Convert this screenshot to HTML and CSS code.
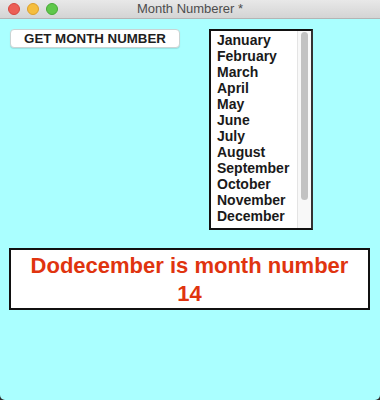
FILE: index.html
```html
<!DOCTYPE html>
<html>
<head>
<meta charset="utf-8">
<title>Month Numberer</title>
<link rel="stylesheet" href="styles.css">
</head>
<body>
<div class="window">
  <div class="titlebar">
    <div class="lights">
      <span class="light red"></span>
      <span class="light yellow"></span>
      <span class="light green"></span>
    </div>
    <div class="title">Month Numberer *</div>
  </div>
  <div class="content">
    <div class="toprow">
      <button class="btn">GET MONTH NUMBER</button>
      <div class="listbox">
        <ul class="list">
          <li>January</li>
          <li>February</li>
          <li>March</li>
          <li>April</li>
          <li>May</li>
          <li>June</li>
          <li>July</li>
          <li>August</li>
          <li>September</li>
          <li>October</li>
          <li>November</li>
          <li>December</li>
        </ul>
        <div class="track"><div class="thumb"></div></div>
      </div>
    </div>
    <div class="result">Dodecember is month number 14</div>
  </div>
</div>
</body>
</html>
```
FILE: styles.css
```css
html, body {
  margin: 0;
  padding: 0;
  background: #2a2a2a;
}
body {
  width: 380px;
  height: 400px;
  overflow: hidden;
  font-family: "Liberation Sans", Arial, sans-serif;
}
.window {
  width: 380px;
  height: 400px;
  background: #aaffff;
  border-radius: 0 0 5px 5px;
  overflow: hidden;
}
.titlebar {
  position: relative;
  height: 18px;
  background: linear-gradient(#e8e8e8, #d4d4d4);
  border-bottom: 1px solid #b4b4b4;
  display: flex;
  align-items: center;
  justify-content: center;
}
.lights {
  position: absolute;
  left: 8px;
  top: 3px;
  display: flex;
  gap: 7px;
}
.light {
  width: 12px;
  height: 12px;
  border-radius: 50%;
  box-sizing: border-box;
}
.red { background: #ec5f56; border: 1px solid #d6473f; }
.yellow { background: #f5be3e; border: 1px solid #dca02b; }
.green { background: #5fc84a; border: 1px solid #47a936; }
.title {
  font-size: 13px;
  color: #4d4d4d;
  line-height: 18px;
}
.content {
  padding: 10px 9px 0 9px;
}
.toprow {
  display: flex;
  align-items: flex-start;
  gap: 29px;
}
.btn {
  margin-left: 1px;
  width: 170px;
  height: 19px;
  padding: 0;
  background: #ffffff;
  border: 1px solid #c9d4d4;
  border-radius: 4px;
  box-shadow: 0 1px 1px rgba(0,0,0,0.12);
  font-family: "Liberation Sans", Arial, sans-serif;
  font-weight: bold;
  font-size: 13.3px;
  color: #1e1e1e;
  line-height: 17px;
  text-align: center;
}
.listbox {
  width: 104px;
  height: 201px;
  box-sizing: border-box;
  border: 2px solid #111;
  border-right-color: #333;
  background: #ffffff;
  display: flex;
}
.list {
  flex: 1;
  margin: 0;
  padding: 1px 0 0 6px;
  list-style: none;
}
.list li {
  font-weight: bold;
  font-size: 14px;
  line-height: 16px;
  color: #1a1a1a;
  white-space: nowrap;
}
.track {
  width: 14px;
  box-sizing: border-box;
  background: #f8f8f8;
  border-left: 1px solid #e4e4e4;
  padding: 0 3px 0 3px;
}
.thumb {
  height: 168px;
  width: 7px;
  background: #c2c2c2;
  border-radius: 4px;
  margin-top: 1px;
}
.result {
  margin-top: 18px;
  width: 361px;
  box-sizing: border-box;
  border: 2px solid #111;
  background: #ffffff;
  padding: 2px 14px 0 14px;
  height: 62px;
  font-weight: bold;
  font-size: 22px;
  line-height: 28px;
  color: #e0340f;
  text-align: center;
}
```
